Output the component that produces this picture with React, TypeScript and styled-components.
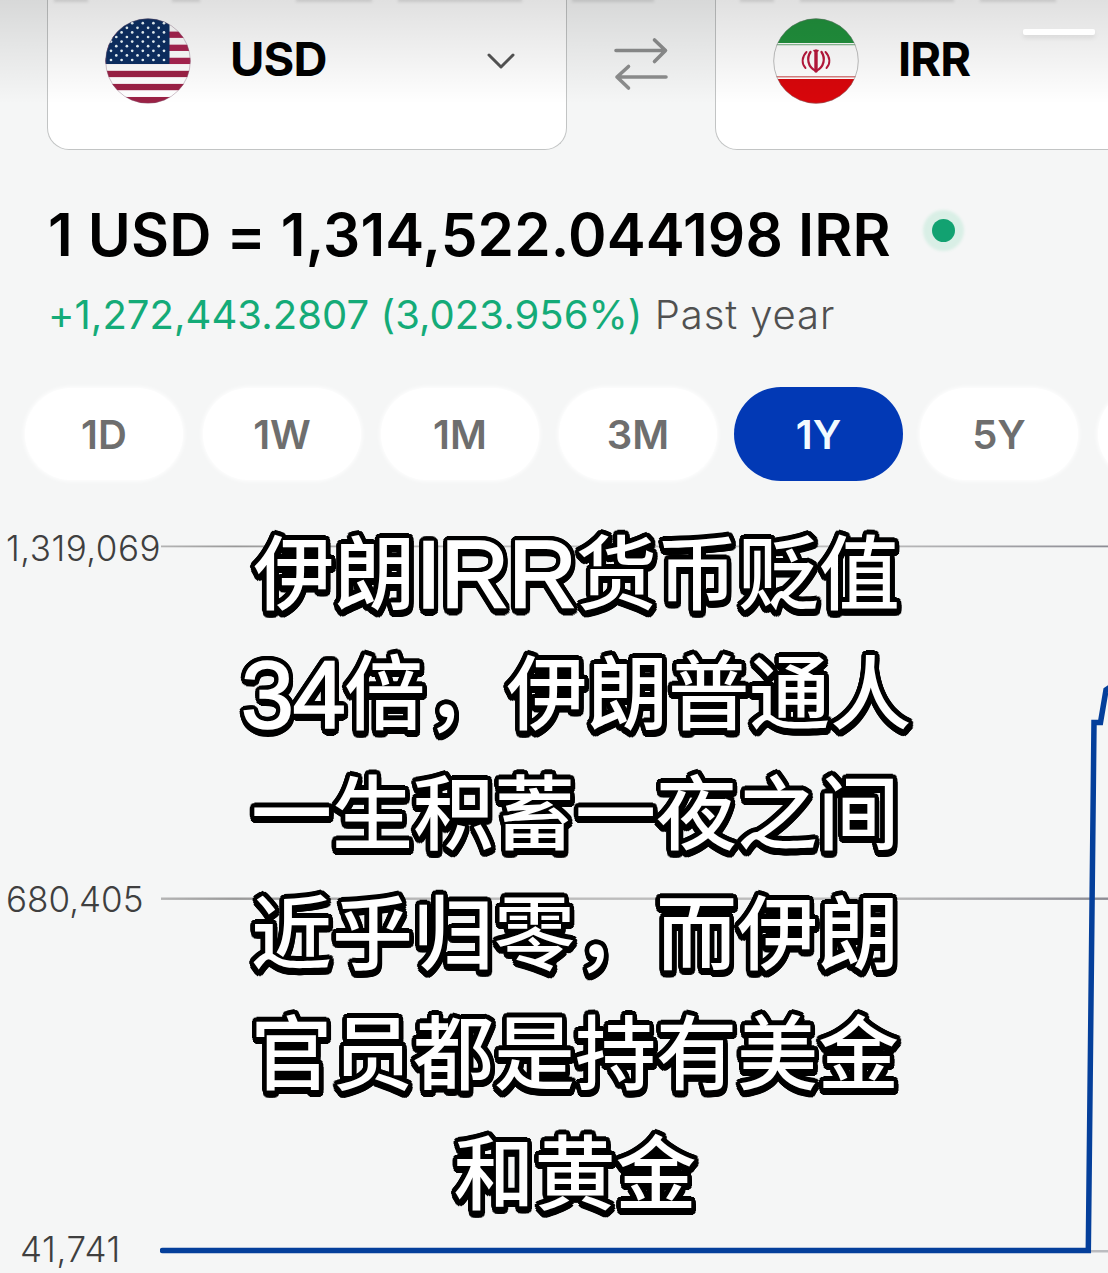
import React from "react";
import styled, { createGlobalStyle } from "styled-components";

const Global = createGlobalStyle`
  *, *::before, *::after { box-sizing: border-box; }
  html, body { margin: 0; padding: 0; background: #f5f6f6; overflow: hidden; }
`;

const Screen = styled.main`
  position: relative;
  display: flex;
  flex-direction: column;
  width: 1108px;
  height: 1273px;
  overflow: hidden;
  background: #f5f6f6;
  font-family: Inter, "Liberation Sans", sans-serif;
`;

const TopFade = styled.div`
  position: absolute;
  inset: 0 0 auto 0;
  display: flex;
  gap: 26px;
  height: 104px;
  padding-left: 54px;
  background: linear-gradient(rgba(0, 0, 0, 0.12), rgba(0, 0, 0, 0.075) 38%, rgba(0, 0, 0, 0));
  pointer-events: none;
`;

const Smudge = styled.span<{ $width: number; $lead?: number }>`
  width: ${(p) => p.$width}px;
  height: 4px;
  margin: -2px 0 0 ${(p) => p.$lead ?? 0}px;
  background: rgba(0, 0, 0, 0.11);
  filter: blur(1.5px);
`;

const Handle = styled.div`
  position: absolute;
  top: 29px;
  right: 13px;
  width: 72px;
  height: 6px;
  border-radius: 2px;
  background: #fff;
  box-shadow: 0 3px 5px rgba(0, 0, 0, 0.08);
`;

const PairRow = styled.section`
  display: flex;
  flex: none;
  height: 151px;
  padding-left: 47px;
`;

const CurrencyCard = styled.div`
  display: flex;
  flex: none;
  align-items: flex-start;
  width: 520px;
  height: 150px;
  padding: 18px 50px 0 57px;
  border: 1.5px solid #c2c4c4;
  border-top: 0;
  border-radius: 0 0 22px 22px;
  background: #fff;
`;

const Code = styled.span`
  flex: 1;
  margin-left: 39px;
  font-size: 47px;
  font-weight: 700;
  line-height: 82px;
  letter-spacing: -0.9px;
  color: #000;
`;

const ChevronBox = styled.svg`
  margin-top: 33px;
  flex: none;
`;

const Swap = styled.div`
  display: flex;
  flex: none;
  justify-content: center;
  width: 148px;
  padding-top: 36px;
`;

const Rate = styled.section`
  display: flex;
  flex: none;
  flex-direction: column;
  padding: 50px 0 0 48px;
  height: 236px;
`;

const Headline = styled.h1`
  display: flex;
  align-items: center;
  margin: 0;
  height: 68px;
  font-size: 58.5px;
  font-weight: 600;
  line-height: 68px;
  letter-spacing: 0.14px;
  white-space: nowrap;
  color: #000;
`;

const LiveDot = styled.span`
  width: 23px;
  height: 23px;
  margin: -10px 0 0 41px;
  border-radius: 50%;
  background: #12a271;
  box-shadow: 0 0 3px 9px #d9efe6;
`;

const Change = styled.p`
  margin: 21px 0 0 0;
  font-size: 40px;
  font-weight: 400;
  line-height: 50px;
  letter-spacing: 0.05px;
  white-space: nowrap;
  color: #14ab78;
`;

const Period = styled.span`
  margin-left: 1px;
  font-weight: 300;
  letter-spacing: 0.9px;
  color: #505050;
`;

const Ranges = styled.nav`
  display: flex;
  flex: none;
  gap: 20px;
  height: 94px;
  padding-left: 25px;
`;

const Range = styled.button<{ $active?: boolean }>`
  flex: none;
  width: ${(p) => (p.$active ? 169 : 158)}px;
  height: ${(p) => (p.$active ? 94 : 92)}px;
  margin: ${(p) => (p.$active ? "0 -3px" : "1px 0 0")};
  padding: 1px 0 0;
  border: 0;
  border-radius: 47px;
  background: ${(p) => (p.$active ? "#0239b5" : "#fff")};
  box-shadow: ${(p) => (p.$active ? "none" : "0 0 4px 1px #fff")};
  font: 600 40px/92px Inter, sans-serif;
  color: ${(p) => (p.$active ? "#f2fbff" : "#6e6e6e")};
`;

const Chart = styled.section`
  display: flex;
  flex: 1;
  min-height: 0;
`;

const Axis = styled.div`
  display: flex;
  flex: none;
  flex-direction: column;
  justify-content: space-between;
  width: 160px;
  height: 788px;
  padding: 47px 0 0 6px;
`;

const Tick = styled.span<{ $indent?: number; $tracking?: number }>`
  padding-left: ${(p) => p.$indent ?? 0}px;
  font-size: 35px;
  font-weight: 300;
  line-height: 40px;
  letter-spacing: ${(p) => p.$tracking ?? 0}px;
  white-space: nowrap;
  color: #3f3f3f;
`;

const Plot = styled.svg`
  display: block;
  flex: none;
`;

const ring = (r: number, n: number, dx = 0, dy = 0) =>
  Array.from({ length: n }, (_, i) => {
    const a = (i / n) * Math.PI * 2;
    return `${(Math.cos(a) * r + dx).toFixed(2)}px ${(Math.sin(a) * r + dy).toFixed(2)}px 0 #000`;
  }).join(", ");

const Caption = styled.div`
  position: absolute;
  top: 508px;
  left: 175px;
  width: 800px;
  text-align: center;
  font-family: "Noto Sans CJK SC", sans-serif;
  font-size: 81px;
  font-weight: 500;
  color: #fff;
  text-shadow: ${ring(4.6, 20)}, ${ring(4.2, 16, 0.5, 3.2)};
`;

const CaptionLine = styled.div<{ $nudge?: number }>`
  height: 120px;
  padding-left: ${(p) => p.$nudge ?? 0}px;
  line-height: 120px;
  white-space: nowrap;
`;

const Latin = styled.span`
  font-family: "Liberation Sans", sans-serif;
  font-size: 96px;
  font-weight: 400;
  line-height: 1;
  letter-spacing: -1.6px;
  vertical-align: -5px;
  -webkit-text-stroke: 1.6px #fff;
  text-shadow: ${ring(5, 20)}, ${ring(2.5, 12)}, ${ring(4.6, 16, 0.5, 3.2)};
`;

const UsFlag = () => (
  <svg width="86" height="86" viewBox="0 0 86 86">
    <clipPath id="us"><circle cx="43" cy="43" r="42.5" /></clipPath>
    <g clipPath="url(#us)">
      <rect width="86" height="86" fill="#fff" />
      {[2, 4, 6, 8, 10, 12].map((i) => (
        <rect key={i} y={i * 6.54 + 0.5} width="86" height="6.3" fill={i > 7 ? "#9b2145" : "#a82450"} />
      ))}
      <rect width="64.5" height="46" fill="#0d2f63" />
      {Array.from({ length: 9 }, (_, r) =>
        Array.from({ length: 7 }, (_, c) => {
          const x = 6 + c * 10.6 - (r % 2 ? 5.3 : 0);
          return x > 1 && x < 62 ? <circle key={`${r}-${c}`} cx={x} cy={42 - r * 4.6} r="1.35" fill="#eefaff" /> : null;
        })
      )}
    </g>
    <circle cx="43" cy="43" r="42.3" fill="none" stroke="#8a6a80" strokeOpacity=".5" strokeWidth=".8" />
  </svg>
);

const IranFlag = () => (
  <svg width="86" height="86" viewBox="0 0 86 86">
    <clipPath id="ir"><circle cx="43" cy="43" r="42.5" /></clipPath>
    <g clipPath="url(#ir)">
      <rect width="86" height="86" fill="#fff" />
      <rect width="86" height="25" fill="#21923d" />
      <rect y="26" width="86" height="1.3" fill="#8fbf98" />
      <rect y="58" width="86" height="1.5" fill="#d98080" />
      <rect y="61" width="86" height="25" fill="#d8060b" />
    </g>
    <circle cx="43" cy="43" r="42.3" fill="none" stroke="#777" strokeOpacity=".6" strokeWidth=".8" />
    <g fill="none" stroke="#b8183c" strokeLinecap="round">
      <path d="M43 33v20" strokeWidth="3.4" />
      <path d="M41 32.5q2 1.500 4 0" strokeWidth="1.6" />
      <path d="M37.5 34c-4 6-3 15 5.500 19c8.500-4 9.500-13 5.500-19" strokeWidth="2.3" />
      <path d="M33.500 34c-5 5-5 12-1 16M52.500 34c5 5 5 12 1 16" strokeWidth="1.9" />
    </g>
  </svg>
);

const ranges = ["1D", "1W", "1M", "3M", "1Y", "5Y", ""];

export default function App() {
  return (
    <Screen>
      <Global />
      <PairRow>
        <CurrencyCard>
          <UsFlag />
          <Code>USD</Code>
          <ChevronBox width="30" height="20" viewBox="0 0 30 20">
            <path d="M3 4L15 16L27 4" fill="none" stroke="#555" strokeWidth="3" strokeLinecap="round" strokeLinejoin="round" />
          </ChevronBox>
        </CurrencyCard>
        <Swap>
          <svg width="56" height="56" viewBox="0 0 56 56" fill="none" stroke="#8d8e8e" strokeWidth="3.6" strokeLinecap="round" strokeLinejoin="round">
            <path d="M3 14.5H52.5M41.5 4L52.5 14.5L41.5 25.5" />
            <path d="M53 41H4M15.5 30.5L4 41L15.5 52" />
          </svg>
        </Swap>
        <CurrencyCard>
          <IranFlag />
          <Code>IRR</Code>
        </CurrencyCard>
      </PairRow>

      <Rate>
        <Headline>
          1 USD = 1,314,522.044198 IRR
          <LiveDot />
        </Headline>
        <Change>
          +1,272,443.2807 (3,023.956%) <Period>Past year</Period>
        </Change>
      </Rate>

      <Ranges>
        {ranges.map((r) => (
          <Range key={r} $active={r === "1Y"}>{r}</Range>
        ))}
      </Ranges>

      <Chart>
        <Axis>
          <Tick $tracking={0.5}>1,319,069</Tick>
          <Tick>680,405</Tick>
          <Tick $indent={14} $tracking={0.6}>41,741</Tick>
        </Axis>
        <Plot width="948" height="792" viewBox="160 481 948 792">
          <defs>
            <linearGradient id="rule" gradientUnits="userSpaceOnUse" x1="160" x2="1108" y1="0" y2="0">
              <stop offset="0" stopColor="#b4b4b4" />
              <stop offset=".08" stopColor="#999" />
              <stop offset=".3" stopColor="#bdbdbd" />
              <stop offset=".75" stopColor="#bdbdbd" />
              <stop offset="1" stopColor="#8c8c94" />
            </linearGradient>
          </defs>
          <rect x="161" y="545.5" width="947" height="1.8" fill="url(#rule)" />
          <rect x="161" y="897.5" width="947" height="2.4" fill="url(#rule)" />
          <rect x="1088" y="1250" width="20" height="2.5" fill="#bbbcc0" />
          <path d="M162.5 1250.5H1088.3L1094 722.5H1100.5L1106 690L1112 686" fill="none" stroke="#043f9b" strokeWidth="5.5" strokeLinecap="round" />
        </Plot>
      </Chart>

      <TopFade>
        <Smudge $width={34} />
        <Smudge $width={28} $lead={58} />
        <Smudge $width={76} $lead={70} />
        <Smudge $width={124} />
        <Smudge $width={82} $lead={24} />
        <Smudge $width={34} $lead={60} />
        <Smudge $width={154} />
        <Smudge $width={76} />
      </TopFade>
      <Handle />
      <Caption>
        <CaptionLine $nudge={3}>伊朗<Latin>IRR</Latin>货币贬值</CaptionLine>
        <CaptionLine $nudge={2}><Latin>34</Latin>倍，伊朗普通人</CaptionLine>
        <CaptionLine>一生积蓄一夜之间</CaptionLine>
        <CaptionLine>近乎归零，而伊朗</CaptionLine>
        <CaptionLine>官员都是持有美金</CaptionLine>
        <CaptionLine>和黄金</CaptionLine>
      </Caption>
    </Screen>
  );
}
